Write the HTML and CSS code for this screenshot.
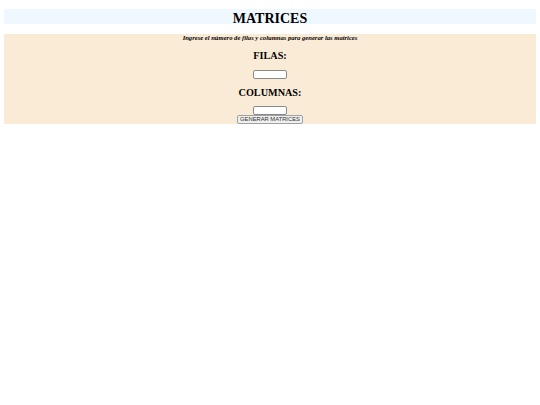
FILE: index.html
```html
<!DOCTYPE html>
<html lang="es">
<head>
<meta charset="utf-8">
<title>Matrices</title>
<link rel="stylesheet" href="styles.css">
</head>
<body>
<div class="header">MATRICES</div>
<form class="panel">
  <p class="hint">Ingrese el número de filas y columnas para generar las matrices</p>
  <h3 class="label">FILAS:</h3>
  <input class="field" type="text">
  <h3 class="label">COLUMNAS:</h3>
  <input class="field field-last" type="text">
  <button class="btn" type="button">GENERAR MATRICES</button>
</form>
</body>
</html>
```
FILE: styles.css
```css
html, body {
  margin: 0;
  padding: 0;
  background: #ffffff;
}
body {
  padding: 0 4px;
  font-family: "Liberation Serif", "Times New Roman", serif;
  color: #000;
}
.header {
  margin-top: 9px;
  height: 15px;
  line-height: 19px;
  background: #F0F8FF;
  text-align: center;
  font-weight: bold;
  font-size: 14px;
}
.panel {
  margin: 10px 0 0;
  height: 90px;
  background: #FAEBD7;
  display: flex;
  flex-direction: column;
  align-items: center;
}
.hint {
  margin: 0;
  height: 8px;
  line-height: 8px;
  font-size: 6.6px;
  font-style: italic;
  font-weight: bold;
}
.label {
  margin: 7px 0 0;
  height: 13px;
  line-height: 13px;
  font-size: 10.2px;
  font-weight: bold;
}
.label + .field + .label { margin-top: 6.5px; }
.field {
  margin: 8px 0 0;
  box-sizing: border-box;
  width: 34px;
  height: 9px;
  padding: 0;
  border: 1px solid #8a8a8a;
  border-radius: 2px;
  background: #fff;
}
.field-last { margin-top: 7.5px; }
.btn {
  box-sizing: border-box;
  width: 66px;
  height: 9px;
  padding: 0;
  margin: 0;
  border: 1px solid #a0a0a0;
  border-radius: 2px;
  background: #efefef;
  font-family: "Liberation Sans", Arial, sans-serif;
  font-size: 5.8px;
  line-height: 7px;
  color: #333;
}
```
